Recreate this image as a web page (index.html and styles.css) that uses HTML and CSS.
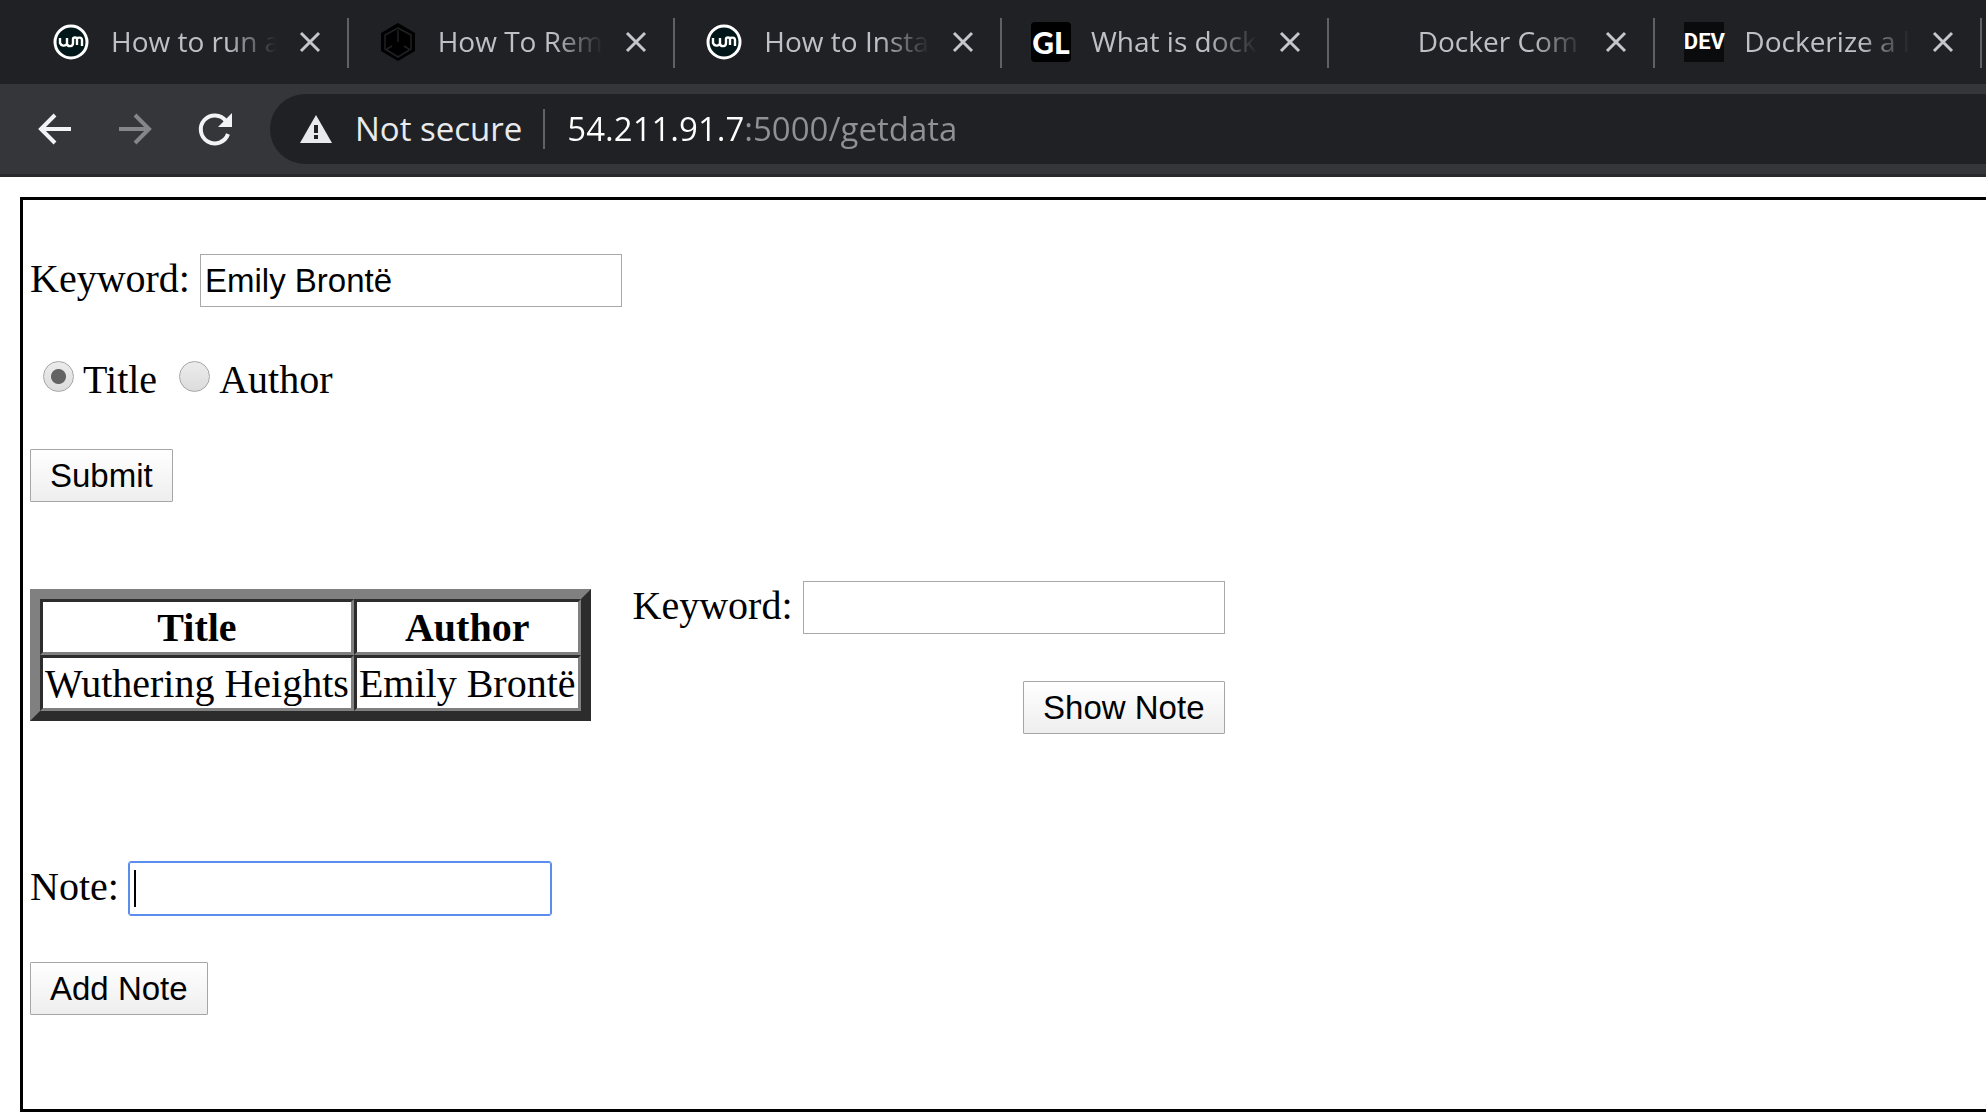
FILE: index.html
```html
<!DOCTYPE html>
<html lang="en">
<head>
<meta charset="utf-8">
<title>Books</title>
<link rel="stylesheet" href="styles.css">
</head>
<body>
<header class="browser">
  <nav class="tabs" aria-label="Tabs">
    <div class="tab">
      <svg class="favicon" viewBox="0 0 40 40" aria-hidden="true"><circle cx="20" cy="20" r="16" fill="#021719" stroke="#fff" stroke-width="3"/><path d="M9 16v5a4 4 0 0 0 7 1v-6m0 6c1 3 6 3 6-1v-4c0-2 4-2 4 0v6m0-6c0-2 5-2 5 1v6" fill="none" stroke="#fff" stroke-width="2.4"/></svg>
      <a class="tab-title" href="#">How to run a</a>
      <button class="close" aria-label="Close tab"><svg class="cross" viewBox="0 0 22 22"><path d="M2 2l18 18M20 2L2 20"/></svg></button>
    </div>
    <div class="tab">
      <svg class="favicon" viewBox="0 0 40 40" aria-hidden="true"><path d="M20 1l17 10v18L20 39 3 29V11z" fill="#000"/><path d="M20 6l13 7v14l-13 8-13-8V13zM20 8v12M9 27l5-3M31 27l-5-3" fill="none" stroke="#202124" stroke-width="1.5"/></svg>
      <a class="tab-title" href="#">How To Rem</a>
      <button class="close" aria-label="Close tab"><svg class="cross" viewBox="0 0 22 22"><path d="M2 2l18 18M20 2L2 20"/></svg></button>
    </div>
    <div class="tab">
      <svg class="favicon" viewBox="0 0 40 40" aria-hidden="true"><circle cx="20" cy="20" r="16" fill="#021719" stroke="#fff" stroke-width="3"/><path d="M9 16v5a4 4 0 0 0 7 1v-6m0 6c1 3 6 3 6-1v-4c0-2 4-2 4 0v6m0-6c0-2 5-2 5 1v6" fill="none" stroke="#fff" stroke-width="2.4"/></svg>
      <a class="tab-title" href="#">How to Insta</a>
      <button class="close" aria-label="Close tab"><svg class="cross" viewBox="0 0 22 22"><path d="M2 2l18 18M20 2L2 20"/></svg></button>
    </div>
    <div class="tab">
      <span class="favicon badge-gl">GL</span>
      <a class="tab-title" href="#">What is dock</a>
      <button class="close" aria-label="Close tab"><svg class="cross" viewBox="0 0 22 22"><path d="M2 2l18 18M20 2L2 20"/></svg></button>
    </div>
    <div class="tab">
      <span class="favicon"></span>
      <a class="tab-title" href="#">Docker Com</a>
      <button class="close" aria-label="Close tab"><svg class="cross" viewBox="0 0 22 22"><path d="M2 2l18 18M20 2L2 20"/></svg></button>
    </div>
    <div class="tab">
      <span class="favicon badge-dev">DEV</span>
      <a class="tab-title" href="#">Dockerize a l</a>
      <button class="close" aria-label="Close tab"><svg class="cross" viewBox="0 0 22 22"><path d="M2 2l18 18M20 2L2 20"/></svg></button>
    </div>
  </nav>
  <div class="toolbar">
    <button class="nav-button" aria-label="Back"><svg class="nav-icon" viewBox="0 0 40 40"><path d="M36 20H6M20 6L6 20l14 14"/></svg></button>
    <button class="nav-button dim" aria-label="Forward"><svg class="nav-icon" viewBox="0 0 40 40"><path d="M4 20h29M20 6l14 14-14 14"/></svg></button>
    <button class="nav-button" aria-label="Reload"><svg class="nav-icon" viewBox="0 0 40 40"><path d="M33 25A14 14 0 1 1 31 12"/><path class="solid" d="M37 4v14H23z"/></svg></button>
    <div class="omnibox">
      <svg class="warning" viewBox="0 0 32 28" aria-hidden="true"><path d="M16 0l16 28H0z" fill="#e8eaed"/><path d="M14 10h4v8h-4zM14 20h4v4h-4z" fill="#202124"/></svg>
      <label class="security" for="url">Not secure</label>
      <input class="url" id="url" type="text" value="54.211.91.7:5000/getdata">
    </div>
  </div>
</header>
<main class="page">
  <form class="stack">
    <div class="field"><label for="keyword">Keyword:</label><input class="text" id="keyword" type="text" value="Emily Brontë"></div>
    <div class="choices">
      <label class="choice"><input class="radio" type="radio" name="by" checked>Title</label>
      <label class="choice"><input class="radio" type="radio" name="by">Author</label>
    </div>
    <button class="push" type="button">Submit</button>
  </form>
  <div class="results">
    <table class="books">
      <thead><tr><th>Title</th><th>Author</th></tr></thead>
      <tbody><tr><td>Wuthering Heights</td><td>Emily Brontë</td></tr></tbody>
    </table>
    <form class="stack">
      <div class="field"><label for="note-keyword">Keyword:</label><input class="text" id="note-keyword" type="text"></div>
      <button class="push end" type="button">Show Note</button>
    </form>
  </div>
  <form class="stack">
    <div class="field"><label for="note">Note:</label><input class="text active" id="note" type="text"></div>
    <button class="push" type="button">Add Note</button>
  </form>
</main>
</body>
</html>
```
FILE: styles.css
```css
* { box-sizing: border-box; }

body {
  margin: 0;
  background: #fff;
  color: #000;
  font: 40px/47px "Liberation Serif", serif;
  overflow-x: hidden;
}

button, input { margin: 0; }

/* Browser chrome */
.browser {
  font-family: "Open Sans", "Noto Sans", sans-serif;
  background: #202124;
}

.tabs {
  display: flex;
  height: 84px;
  padding: 18px 4px 16px 22px;
}

.tab {
  flex: 1 1 0;
  min-width: 0;
  height: 50px;
  display: flex;
  align-items: center;
  padding: 0 26px 2px 29px;
  border-right: 2px solid #5f6165;
}

.favicon {
  flex: none;
  width: 40px;
  height: 40px;
  margin-right: 20px;
}

.badge-gl, .badge-dev {
  display: flex;
  align-items: center;
  justify-content: center;
  background: #000;
  color: #fff;
  font-weight: 700;
  line-height: 40px;
}

.badge-gl { font-family: Lato, sans-serif; font-size: 30px; font-weight: 900; border-radius: 4px; }
.badge-dev { background: #0a0b0d; font-family: "Liberation Sans Narrow", Roboto, sans-serif; font-size: 22px; }

.tab-title {
  flex: 1 1 0;
  min-width: 0;
  overflow: hidden;
  padding-bottom: 2px;
  white-space: nowrap;
  color: #bdc1c6;
  font-size: 28px;
  line-height: 40px;
  text-decoration: none;
  -webkit-mask-image: linear-gradient(to right, #000 70%, transparent);
  mask-image: linear-gradient(to right, #000 70%, transparent);
}

.close {
  flex: none;
  width: 22px;
  height: 22px;
  margin-left: 22px;
  padding: 0;
  border: 0;
  background: none;
}

.cross {
  display: block;
  fill: none;
  stroke: #c4c7cb;
  stroke-width: 3;
}

.toolbar {
  display: flex;
  align-items: center;
  height: 93px;
  padding: 10px 0 10px 35px;
  background: #35363a;
  border-bottom: 3px solid #292a2d;
}

.nav-button {
  flex: none;
  width: 40px;
  height: 40px;
  margin-right: 40px;
  padding: 0;
  border: 0;
  background: none;
}

.nav-icon {
  display: block;
  fill: none;
  stroke: #f1f3f4;
  stroke-width: 4;
}

.nav-icon .solid { fill: #f1f3f4; stroke: none; }
.dim .nav-icon { stroke: #85868a; }

.omnibox {
  flex: 1;
  min-width: 0;
  height: 70px;
  display: flex;
  align-items: center;
  margin-left: -5px;
  padding-left: 30px;
  border-radius: 35px 0 0 35px;
  background: #202124;
}

.warning { flex: none; width: 32px; height: 28px; }

.security {
  flex: none;
  margin-left: 23px;
  padding-right: 21px;
  border-right: 2px solid #5f6368;
  color: #e8eaed;
  font-size: 33px;
  line-height: 40px;
}

.url {
  flex: 1;
  min-width: 0;
  height: 48px;
  padding: 0;
  margin-left: 22px;
  border: 0;
  outline: 0;
  font: 33px/48px "Open Sans", "Noto Sans", sans-serif;
  color: transparent;
  background: linear-gradient(to right, #fff 177px, #8f9195 177px);
  -webkit-background-clip: text;
  background-clip: text;
}

/* Page content */
.page {
  margin: 20px 0 6px 20px;
  padding: 54px 7px 94px;
  border: 3px solid #000;
  border-right: 0;
}

.stack {
  display: flex;
  flex-direction: column;
  align-items: flex-start;
  gap: 47px;
}

.field { display: flex; align-items: baseline; gap: 10px; }

.text {
  width: 422px;
  height: 53px;
  padding: 0 4px;
  border: 1px solid #a9a9a9;
  background: #fff;
  color: #000;
  font: 33px/38px "Liberation Sans", sans-serif;
}

/* Focused field, with its text caret */
.active {
  border-color: #5b8def;
  border-radius: 2px;
  outline: 1px solid #5b8def;
  background: linear-gradient(#000, #000) 4px center / 2px 37px no-repeat #fff;
}

.choices { display: flex; gap: 22px; padding: 4px 0 0 13px; line-height: 44px; }
.choice { display: flex; gap: 9px; }

.radio {
  appearance: none;
  width: 31px;
  height: 31px;
  margin-top: 3px;
  border: 1px solid #a6a6a6;
  border-radius: 50%;
  background: linear-gradient(#ececec, #dcdcdc);
}

.radio:checked {
  background: radial-gradient(circle, #636363 7px, transparent 8px), linear-gradient(#ececec, #dcdcdc);
}

.push {
  height: 53px;
  padding: 0 19px;
  border: 1px solid #a6a6a6;
  border-radius: 1px;
  background: linear-gradient(#fff, #eee);
  color: #000;
  font: 33px/51px "Liberation Sans", sans-serif;
}

.end { align-self: flex-end; }

.results {
  display: flex;
  align-items: flex-start;
  gap: 42px;
  margin: 79px 0 128px;
}

.books {
  margin-top: 8px;
  border: 10px solid;
  border-color: #808080 #2c2c2c #2c2c2c #808080;
  border-spacing: 0;
  line-height: 44px;
}

.books th, .books td {
  padding: 4px 2px 2px;
  border: 3px solid;
  border-color: #2c2c2c #808080 #808080 #2c2c2c;
}
```
